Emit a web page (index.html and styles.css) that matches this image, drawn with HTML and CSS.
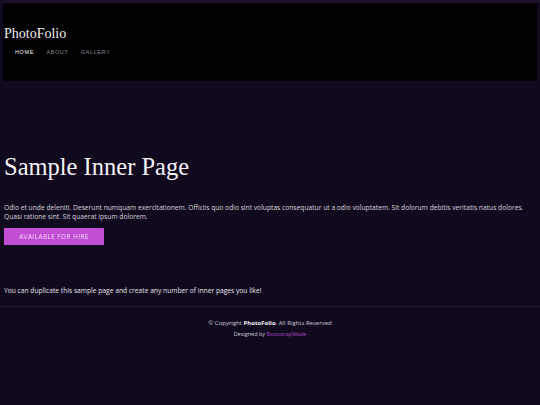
FILE: index.html
```html
<!DOCTYPE html>
<html>
<head>
<meta charset="utf-8">
<link rel="stylesheet" href="styles.css">
</head>
<body>
<header class="header">
  <div class="header-inner">
    <a class="logo" href="#">PhotoFolio</a>
    <nav class="nav">
      <a class="nav-link active" href="#">Home</a>
      <a class="nav-link" href="#">About</a>
      <a class="nav-link" href="#">Gallery</a>
    </nav>
  </div>
</header>
<main class="main">
  <section class="hero">
    <h1 class="title">Sample Inner Page</h1>
    <p class="lead">Odio et unde deleniti. Deserunt numquam exercitationem. Officiis quo odio sint voluptas consequatur ut a odio voluptatem. Sit dolorum debitis veritatis natus dolores. Quasi ratione sint. Sit quaerat ipsum dolorem.</p>
    <a class="btn" href="#">Available for hire</a>
  </section>
  <section class="content">
    <p class="note">You can duplicate this sample page and create any number of inner pages you like!</p>
  </section>
</main>
<footer class="footer">
  <div class="copyright">&copy; Copyright <strong>PhotoFolio</strong>. All Rights Reserved</div>
  <div class="credits">Designed by <a href="#">BootstrapMade</a></div>
</footer>
</body>
</html>
```
FILE: styles.css
```css
html, body {
  margin: 0;
  padding: 0;
  background: #110a1e;
  color: #e8e6ec;
  font-family: "Open Sans", "Liberation Sans", sans-serif;
}
body {
  border-top: 3px solid #1a1129;
  min-height: 402px;
}
.header {
  padding: 0 3px;
}
.header-inner {
  background: #000;
  height: 78px;
  display: flex;
  flex-direction: column;
  padding: 22px 0 0 1px;
  box-sizing: border-box;
}
.logo {
  font-family: "Liberation Serif", "DejaVu Serif", serif;
  font-size: 14px;
  color: #f0eef2;
  text-decoration: none;
  line-height: 18px;
}
.nav {
  display: flex;
  gap: 12.5px;
  padding-left: 11px;
  margin-top: 5px;
}
.nav-link {
  font-family: "Liberation Sans", "Open Sans", sans-serif;
  font-size: 5.5px;
  letter-spacing: 0.6px;
  text-transform: uppercase;
  color: #8a8790;
  text-decoration: none;
  line-height: 8px;
}
.nav-link.active {
  color: #f2f2f2;
}
.main {
  padding: 0 4px;
}
.hero {
  padding-top: 71px;
}
.title {
  font-family: "Liberation Serif", "DejaVu Serif", serif;
  font-weight: normal;
  font-size: 24.5px;
  line-height: 30px;
  margin: 0;
  color: #f3f1f5;
}
.lead {
  font-size: 6.7px;
  line-height: 9px;
  margin: 21px 0 7px;
  color: #d8d5dc;
}
.btn {
  display: flex;
  align-items: center;
  justify-content: center;
  width: 100px;
  height: 17px;
  background: #c24ed6;
  color: #f3d9f7;
  font-size: 6.3px;
  letter-spacing: 0.5px;
  text-transform: uppercase;
  text-decoration: none;
  border-radius: 1px;
}
.content {
  padding-top: 41px;
}
.note {
  margin: 0;
  font-size: 6.7px;
  line-height: 9px;
  color: #e4e2e8;
}
.footer {
  margin-top: 11px;
  border-top: 1px solid #241b33;
  padding-top: 12px;
  text-align: center;
}
.copyright {
  font-size: 6px;
  line-height: 9px;
  color: #cfccd4;
}
.copyright strong {
  color: #f2f0f4;
}
.credits {
  font-size: 5.5px;
  line-height: 9px;
  margin-top: 2px;
  color: #cfccd4;
}
.credits a {
  color: #a842c2;
  text-decoration: none;
}
```
